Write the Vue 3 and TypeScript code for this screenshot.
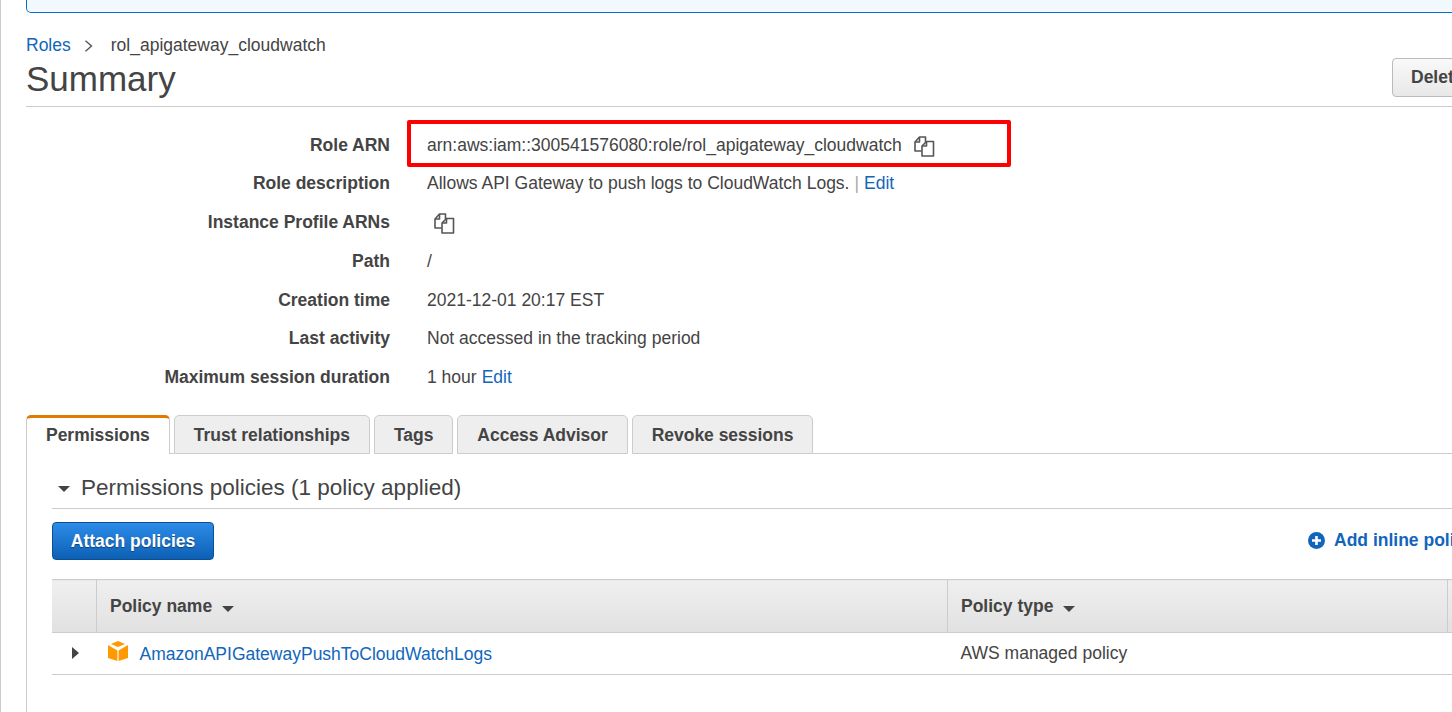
<script setup lang="ts">
type SummaryRow = { label: string, value?: string, edit?: boolean, copy?: boolean, sep?: boolean }

const rows: SummaryRow[] = [
  { label: 'Role ARN', value: 'arn:aws:iam::300541576080:role/rol_apigateway_cloudwatch', copy: true },
  { label: 'Role description', value: 'Allows API Gateway to push logs to CloudWatch Logs.', edit: true, sep: true },
  { label: 'Instance Profile ARNs', copy: true },
  { label: 'Path', value: '/' },
  { label: 'Creation time', value: '2021-12-01 20:17 EST' },
  { label: 'Last activity', value: 'Not accessed in the tracking period' },
  { label: 'Maximum session duration', value: '1 hour', edit: true }
]

const tabs = ['Permissions', 'Trust relationships', 'Tags', 'Access Advisor', 'Revoke sessions']
</script>

<template>
  <div class="page">
    <div class="banner"></div>

    <nav class="crumbs">
      <a class="link">Roles</a>
      <svg class="chevron" width="10" height="12" viewBox="0 0 10 12"><path d="M1.5 .7 7.5 6 1.5 11.3" fill="none" stroke="#555" stroke-width="1.4" /></svg>
      <span>rol_apigateway_cloudwatch</span>
    </nav>

    <header class="title-row">
      <h1>Summary</h1>
      <button class="delete-btn">Delete role</button>
    </header>

    <section class="summary">
      <div v-for="(row, i) in rows" :key="row.label" class="row">
        <div class="label">{{ row.label }}</div>
        <div class="value" :class="{ 'value-icon': !row.value }">
          <span v-if="row.value">{{ row.value }}</span>
          <span v-if="row.sep" class="sep">|</span>
          <a v-if="row.edit" class="link edit">Edit</a>
          <svg v-if="row.copy" class="copy" width="22" height="22" viewBox="0 0 22 22" fill="none" stroke="#555" stroke-width="1.6" stroke-linejoin="round">
            <path d="M7.5 15H1V6L5.5 1h6v5" />
            <path d="M5.5 1v5H1" />
            <path d="M8 20V10l4.5-4.5h7V20z" fill="#fff" />
            <path d="M12.5 5.5V10H8" />
          </svg>
          <div v-if="i === 0" class="highlight"></div>
        </div>
      </div>
    </section>

    <div class="tabs">
      <div v-for="(tab, i) in tabs" :key="tab" class="tab" :class="{ active: i === 0 }">{{ tab }}</div>
      <div class="tabs-rest"></div>
    </div>

    <section class="panel">
      <h2 class="policies-title"><span class="caret-down big"></span>Permissions policies (1 policy applied)</h2>

      <div class="actions">
        <button class="attach-btn">Attach policies</button>
        <a class="add-inline">
          <svg width="17" height="17" viewBox="0 0 17 17"><circle cx="8.5" cy="8.5" r="8.5" fill="#1166bb" /><path d="M8.5 4v9M4 8.5h9" stroke="#fff" stroke-width="2.6" /></svg>
          Add inline policy
        </a>
      </div>

      <table class="policy-table">
        <thead>
          <tr>
            <th class="col-expand"></th>
            <th class="col-name">Policy name<span class="caret-down"></span></th>
            <th class="col-type">Policy type<span class="caret-down"></span></th>
            <th></th>
          </tr>
        </thead>
        <tbody>
          <tr>
            <td class="col-expand"><span class="caret-right"></span></td>
            <td class="col-name">
              <div class="policy-cell">
                <svg class="cube" width="20" height="20" viewBox="0 0 20 20">
                  <path d="M10 0 17 3 10 6 3 3z" fill="#f90" />
                  <path d="M0 4 9.4 9.5V20L0 17z" fill="#f90" />
                  <path d="M20 4 10.6 9.5V20L20 17z" fill="#f90" />
                </svg>
                <a class="link policy-link">AmazonAPIGatewayPushToCloudWatchLogs</a>
              </div>
            </td>
            <td>AWS managed policy</td>
            <td></td>
          </tr>
        </tbody>
      </table>
    </section>
  </div>
</template>

<style>
html, body {
  margin: 0;
  overflow: hidden;
  background: #fff;
}
</style>

<style scoped>
.page {
  width: 1452px;
  height: 712px;
  box-sizing: border-box;
  overflow: hidden;
  border-left: 1px solid #ccc;
  padding-left: 25px;
  font-family: "Liberation Sans", Arial, sans-serif;
  font-size: 17.5px;
  color: #444;
}
.link {
  color: #1166bb;
  text-decoration: none;
}
.banner {
  width: 1500px;
  height: 12px;
  margin-top: 0;
  box-sizing: content-box;
  background: #f1f8fe;
  border: 1px solid #0f6cc4;
  border-top: 0;
  border-radius: 0 0 5px 5px;
}
.crumbs {
  display: flex;
  align-items: center;
  height: 19px;
  margin-top: 23px;
}
.chevron {
  margin: 0 17px 0 13px;
}
.title-row {
  width: 1500px;
  height: 52px;
  box-sizing: border-box;
  border-bottom: 1px solid #ccc;
  position: relative;
  padding-top: 4px;
}
h1 {
  margin: 0;
  font-size: 35px;
  font-weight: 400;
  line-height: 40px;
}
.delete-btn {
  position: absolute;
  left: 1366px;
  top: 3px;
  width: 140px;
  height: 39px;
  padding: 0 0 0 18px;
  text-align: left;
  white-space: nowrap;
  font: bold 17.5px "Liberation Sans", Arial, sans-serif;
  color: #444;
  background: linear-gradient(#f9f9f9, #e8e8e8);
  border: 1px solid #bbb;
  border-radius: 4px;
}
.summary {
  padding-top: 18.8px;
}
.row {
  display: flex;
  align-items: center;
  height: 38.75px;
}
.label {
  width: 364px;
  text-align: right;
  font-weight: 700;
  white-space: nowrap;
}
.value {
  position: relative;
  margin-left: 37px;
  display: flex;
  align-items: center;
  white-space: nowrap;
}
.copy {
  margin-left: 12px;
  margin-top: 3px;
}
.value-icon .copy {
  margin-left: 7px;
  margin-top: 3px;
}
.sep {
  color: #aaa;
  margin: 0 5px;
}
.edit {
  margin-left: 5px;
}
.sep + .edit {
  margin-left: 0;
}
.highlight {
  position: absolute;
  left: -20px;
  top: -13px;
  width: 596px;
  height: 39px;
  border: 4px solid #f00;
  border-radius: 2px;
}
.tabs {
  display: flex;
  width: 1500px;
  height: 39px;
  margin-top: 18.2px;
  box-sizing: border-box;
}
.tab {
  box-sizing: border-box;
  height: 39px;
  padding: 9px 19px 0;
  margin-right: 4px;
  font-weight: 700;
  letter-spacing: -0.025px;
  background: #eee;
  border: 1px solid #ccc;
  border-radius: 5px 5px 0 0;
  white-space: nowrap;
}
.tab.active {
  margin-right: 0;
  background: #fff;
  border-top: 3px solid #e07b00;
  border-bottom: 0;
  padding-top: 7px;
  position: relative;
}
.tabs-rest {
  flex: 1;
  border-bottom: 1px solid #ccc;
  margin-left: -4px;
}
.tab.active + .tab {
  margin-left: 4px;
  position: relative;
}
.tab.active + .tab::before {
  content: "";
  position: absolute;
  left: -5px;
  width: 4px;
  bottom: -1px;
  height: 1px;
  background: #ccc;
}
.panel {
  width: 1500px;
  height: 300px;
  box-sizing: border-box;
  border-left: 1px solid #ccc;
  padding-left: 25px;
}
.policies-title {
  display: flex;
  align-items: center;
  height: 55px;
  box-sizing: border-box;
  margin: 0;
  font-size: 22.5px;
  font-weight: 400;
  border-bottom: 1px solid #ccc;
  padding-top: 13px;
}
.caret-down {
  display: inline-block;
  width: 0;
  height: 0;
  border-left: 6px solid transparent;
  border-right: 6px solid transparent;
  border-top: 6px solid #444;
  margin-left: 10px;
  vertical-align: 0;
}
.caret-down.big {
  margin: 3px 11px 0 6px;
}
.caret-right {
  display: inline-block;
  width: 0;
  height: 0;
  border-top: 6.5px solid transparent;
  border-bottom: 6.5px solid transparent;
  border-left: 7px solid #444;
  margin-top: 3px;
  margin-left: 3px;
}
.actions {
  display: flex;
  justify-content: space-between;
  align-items: center;
  margin-top: 13px;
  height: 38px;
  position: relative;
}
.attach-btn {
  width: 162px;
  height: 38px;
  padding: 0;
  font: bold 17.5px "Liberation Sans", Arial, sans-serif;
  color: #fff;
  text-shadow: 0 1px 1px rgba(0, 0, 0, .4);
  background: linear-gradient(#2c8ce8, #0d60b4);
  border: 1px solid #0b4f94;
  border-radius: 4px;
}
.add-inline {
  position: absolute;
  left: 1256px;
  top: 8px;
  display: flex;
  align-items: center;
  gap: 9px;
  font-weight: 700;
  color: #1166bb;
  white-space: nowrap;
}
.policy-table {
  margin-top: 19px;
  border-collapse: collapse;
  table-layout: fixed;
  width: 1448px;
}
.policy-table th {
  height: 52px;
  padding: 0 0 0 13px;
  text-align: left;
  font-weight: 700;
  background: linear-gradient(#efefef, #e1e1e1);
  border-top: 1px solid #ccc;
  border-bottom: 1px solid #ccc;
  border-right: 1px solid #ccc;
  white-space: nowrap;
}
.policy-table td {
  height: 41px;
  padding: 0 0 0 13px;
  border-bottom: 1px solid #ccc;
  white-space: nowrap;
}
.policy-table .col-expand {
  width: 44px;
  padding: 0;
  text-align: center;
}
.col-name {
  width: 837px;
}
.col-type {
  width: 486px;
}
.policy-cell {
  display: flex;
  align-items: center;
  gap: 12px;
  margin-left: -2px;
}
.policy-link {
  padding-top: 2px;
}
.cube {
  margin-top: -6px;
}
</style>
